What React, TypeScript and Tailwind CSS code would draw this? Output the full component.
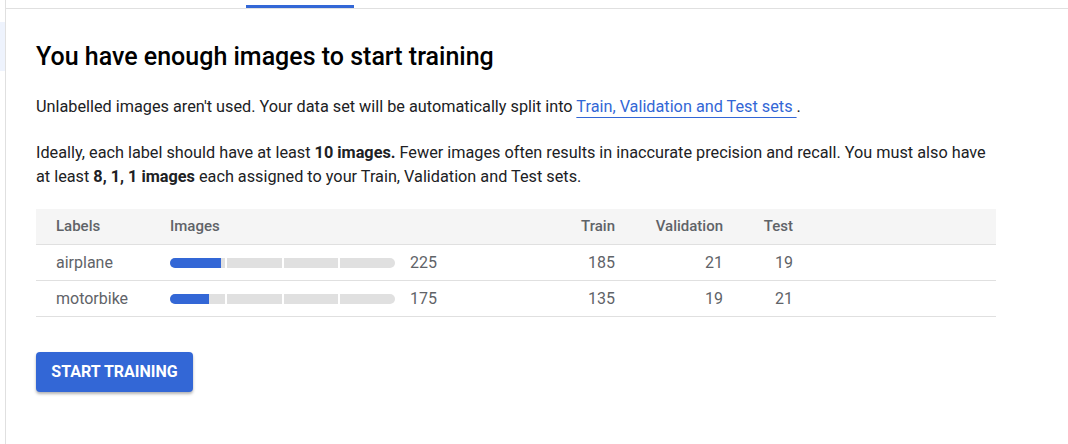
const rows = [
    { label: "airplane", total: 225, fill: 51, train: 185, validation: 21, test: 19 },
    { label: "motorbike", total: 175, fill: 39, train: 135, validation: 19, test: 21 },
];

const cols = "grid grid-cols-[134px_300px_145px_108px_70px_1fr] items-center";

const Bar = ({ fill }: { fill: number }) => {
    return (
        <div className="relative flex w-[225px] h-[10px] gap-[2px]">
            <div className="flex-1 bg-[#e0e0e0] rounded-l-full" />
            <div className="flex-1 bg-[#e0e0e0]" />
            <div className="flex-1 bg-[#e0e0e0]" />
            <div className="flex-1 bg-[#e0e0e0] rounded-r-full" />
            <div className="absolute left-0 top-0 h-full bg-[#3367d6] rounded-l-full" style={{ width: fill }} />
        </div>
    );
};

const App = () => {
    return (
        <div className="w-[1068px] h-[444px] bg-white flex overflow-hidden font-['Roboto','Liberation_Sans',sans-serif] text-[#202124]">
            <div className="w-[6px] shrink-0 border-r border-[#e0e0e0]">
                <div className="mt-[22px] h-[49px] bg-[#eef3fd]" />
            </div>

            <div className="flex-1 flex flex-col">
                <div className="h-[9px] border-b border-[#e0e0e0]">
                    <div className="ml-[240px] mt-[5px] w-[108px] h-[3px] bg-[#3367d6]" />
                </div>

                <div className="pl-[30px] flex flex-col">
                    <h1 className="mt-[33px] text-[25px] leading-[30px] font-medium text-black">You have enough images to start training</h1>

                    <p className="mt-[23px] text-[16.25px] leading-[24px]">
                        Unlabelled images aren't used. Your data set will be automatically split into{" "}
                        <a className="text-[#3367d6] underline decoration-[#3367d6] underline-offset-[5px]">Train, Validation and Test sets </a>.
                    </p>

                    <p className="mt-[22px] w-[960px] text-[16.25px] leading-[24px]">
                        Ideally, each label should have at least <b className="font-bold">10 images.</b> Fewer images often results in inaccurate precision and recall. You must also have at least <b className="font-bold">8, 1, 1 images</b> each assigned to your Train, Validation and Test sets.
                    </p>

                    <div className="mt-[20px] w-[960px]">
                        <div className={`${cols} h-[36px] bg-[#f5f5f5] border-b border-[#e0e0e0] text-[15px] font-medium text-[#5f6368]`}>
                            <div className="pl-[20px]">Labels</div>
                            <div>Images</div>
                            <div className="text-right">Train</div>
                            <div className="text-right">Validation</div>
                            <div className="text-right">Test</div>
                            <div />
                        </div>
                        {rows.map((r) => (
                            <div key={r.label} className={`${cols} h-[36px] border-b border-[#e0e0e0] text-[16px] text-[#5f6368]`}>
                                <div className="pl-[20px]">{r.label}</div>
                                <div className="flex items-center gap-[15px]">
                                    <Bar fill={r.fill} />
                                    <span>{r.total}</span>
                                </div>
                                <div className="text-right">{r.train}</div>
                                <div className="text-right">{r.validation}</div>
                                <div className="text-right">{r.test}</div>
                                <div />
                            </div>
                        ))}
                    </div>

                    <div className="mt-[35px]">
                        <button className="h-[40px] w-[157px] rounded-[4px] bg-[#3367d6] text-white text-[16px] font-bold shadow-[0_2px_3px_rgba(0,0,0,0.3)]">
                            START TRAINING
                        </button>
                    </div>
                </div>
            </div>
        </div>
    );
};

export default App;
